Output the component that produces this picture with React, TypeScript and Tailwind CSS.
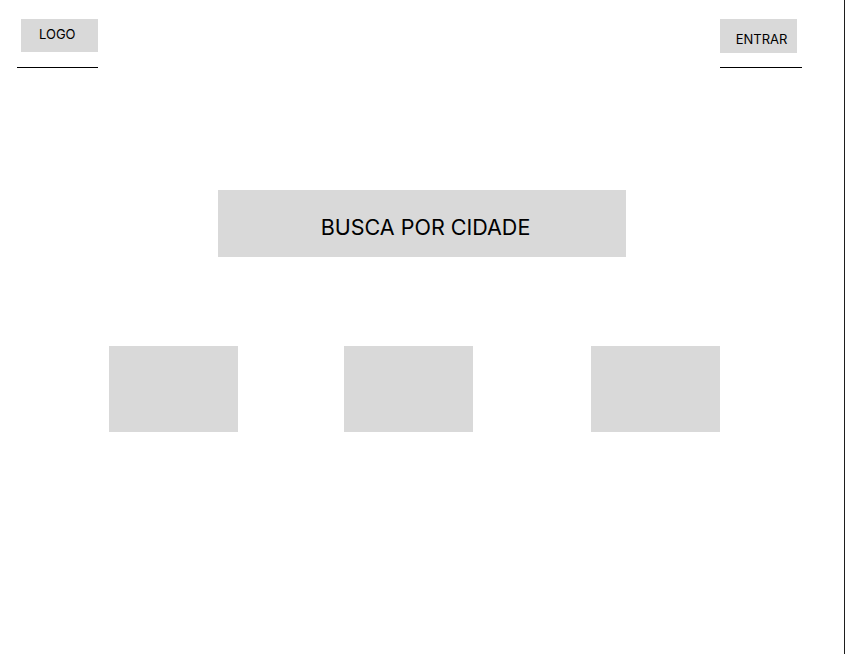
import React from 'react';

const App: React.FC = () => {
  return (
    <div className="relative w-[846px] h-[654px] bg-white font-['Inter',sans-serif] text-black overflow-hidden">
      {/* right edge rule */}
      <div className="absolute top-0 right-[1px] w-px h-full bg-[#1e1e1e]" />

      {/* Header */}
      <header className="flex justify-between items-start pt-[19px] pl-[17px] pr-[44px]">
        <div className="flex flex-col w-[81px]">
          <div className="ml-[4px] w-[77px] h-[33px] bg-[#d9d9d9] flex items-center pl-[18px] pb-[3px] text-[13px] leading-none">
            LOGO
          </div>
          <div className="mt-[15px] h-px bg-black" />
        </div>
        <div className="flex flex-col w-[82px]">
          <div className="w-[77px] h-[34px] bg-[#d9d9d9] flex items-end justify-center pb-[7px] pl-[6px] text-[13px] leading-none">
            ENTRAR
          </div>
          <div className="mt-[14px] h-px bg-black" />
        </div>
      </header>

      {/* Search */}
      <div className="flex pl-[218px] mt-[122px]">
        <div className="w-[408px] h-[67px] bg-[#d9d9d9] flex items-center justify-center pt-[9px] pl-[7px] text-[21.5px] leading-none">
          BUSCA POR CIDADE
        </div>
      </div>

      {/* Cards */}
      <div className="flex pl-[109px] mt-[89px]">
        <div className="w-[129px] h-[86px] bg-[#d9d9d9]" />
        <div className="ml-[106px] w-[129px] h-[86px] bg-[#d9d9d9]" />
        <div className="ml-[118px] w-[129px] h-[86px] bg-[#d9d9d9]" />
      </div>
    </div>
  );
};

export default App;
